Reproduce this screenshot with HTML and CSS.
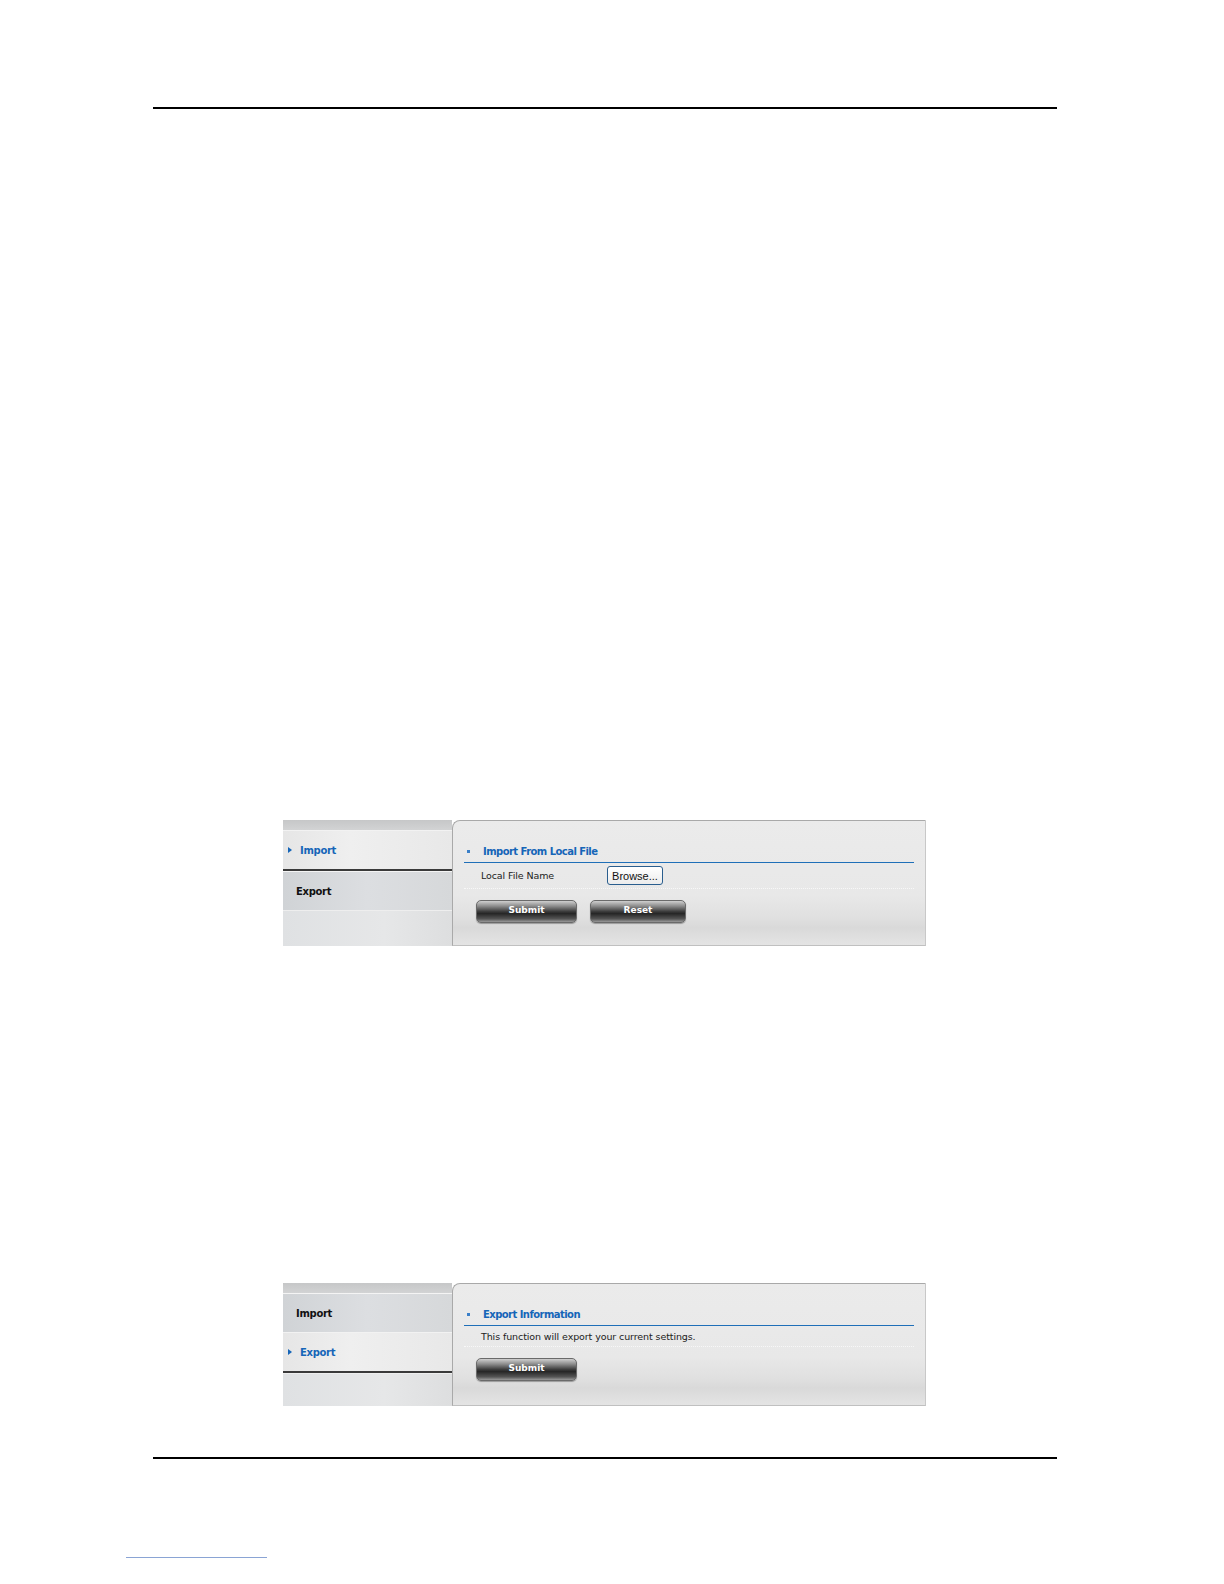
FILE: index.html
```html
<!DOCTYPE html>
<html>
<head>
<meta charset="utf-8">
<link rel="stylesheet" href="styles.css">
</head>
<body>
<div class="page">
  <div class="rule rule-top"></div>

  <div class="panel panel-import">
    <div class="side">
      <div class="side-strip"></div>
      <div class="side-item active"><span class="arrow"></span>Import</div>
      <div class="side-item">Export</div>
      <div class="side-rest"></div>
    </div>
    <div class="content">
      <div class="title"><span class="bullet"></span>Import From Local File</div>
      <div class="row">
        <span class="label">Local File Name</span>
        <span class="browse">Browse...</span>
      </div>
      <div class="btns">
        <span class="btn">Submit</span>
        <span class="btn">Reset</span>
      </div>
    </div>
  </div>

  <div class="panel panel-export">
    <div class="side">
      <div class="side-strip"></div>
      <div class="side-item first">Import</div>
      <div class="side-item active"><span class="arrow"></span>Export</div>
      <div class="side-rest"></div>
    </div>
    <div class="content">
      <div class="title"><span class="bullet"></span>Export Information</div>
      <div class="row row-text">This function will export your current settings.</div>
      <div class="btns">
        <span class="btn">Submit</span>
      </div>
    </div>
  </div>

  <div class="rule rule-bottom"></div>
  <div class="link-line"></div>
</div>
</body>
</html>
```

FILE: styles.css
```css
html, body {
  margin: 0;
  padding: 0;
  background: #ffffff;
  overflow: hidden;
}
.page {
  display: flex;
  flex-direction: column;
  font-family: "DejaVu Sans", Verdana, sans-serif;
}
.rule {
  width: 904px;
  height: 2px;
  background: #000;
  margin-left: 153px;
}
.rule-top {
  margin-top: 107px;
}
.panel {
  margin-left: 283px;
  width: 643px;
  display: flex;
}
.panel-import {
  margin-top: 711px;
  height: 126px;
}
.panel-export {
  margin-top: 337px;
  height: 123px;
}
.rule-bottom {
  margin-top: 51px;
}
.link-line {
  margin-top: 98px;
  margin-left: 126px;
  width: 141px;
  height: 1px;
  background: #8aa4d4;
}

/* sidebar */
.side {
  width: 169px;
  display: flex;
  flex-direction: column;
  background: linear-gradient(90deg, #dcdee0 0%, #e4e5e6 60%, #dadbdc 100%);
}
.side-strip {
  height: 10px;
  background: linear-gradient(#c6c7c8, #d2d3d4);
}
.side-item {
  height: 38px;
  display: flex;
  align-items: center;
  padding-left: 13px;
  font-size: 10px;
  font-weight: bold;
  color: #111;
  border-top: 1px solid #f4f4f4;
  background: linear-gradient(90deg, #d0d3d6 0%, #dcdee1 50%, #d6d8da 100%);
  letter-spacing: -0.3px;
}
.side-item.active {
  padding-left: 5px;
  color: #1565b8;
  background: linear-gradient(90deg, #e6e6e6 0%, #efefef 40%, #e8e8e8 100%);
  border-top: 1px solid #f2f2f2;
  border-bottom: 2px solid #3a3a3a;
}
.arrow {
  width: 0;
  height: 0;
  border-top: 3px solid transparent;
  border-bottom: 3px solid transparent;
  border-left: 4px solid #1565b8;
  margin-right: 8px;
}
.side-rest {
  flex: 1;
  border-top: 1px solid #eeeeee;
  background: linear-gradient(90deg, #dfe1e3 0%, #e6e7e8 60%, #dddedf 100%);
}

/* content */
.content {
  flex: 1;
  display: flex;
  flex-direction: column;
  border: 1px solid #a9a9a9;
  border-right-color: #c8c8c8;
  border-bottom-color: #c0c0c0;
  border-top-left-radius: 8px;
  padding: 0 11px 0 11px;
  background: linear-gradient(#ebebeb 0%, #e8e8e8 60%, #e0e0e0 78%, #d9d9d9 86%, #e4e4e4 100%);
}
.title {
  margin-top: 20px;
  height: 21px;
  display: flex;
  align-items: center;
  font-size: 10px;
  font-weight: bold;
  color: #1565b8;
  border-bottom: 1px solid #1f6fb8;
  letter-spacing: -0.55px;
}
.bullet {
  width: 3px;
  height: 3px;
  background: #3a7fc8;
  margin-left: 3px;
  margin-right: 13px;
}
.row {
  height: 25px;
  display: flex;
  align-items: center;
  padding-left: 17px;
  font-size: 9.5px;
  color: #222;
  border-bottom: 1px dotted #f8f8f8;
  letter-spacing: -0.1px;
}
.row-text {
  height: 20px;
}
.label {
  width: 126px;
}
.browse {
  height: 17px;
  width: 54px;
  border: 1px solid #2a5e8e;
  border-radius: 3px;
  background: linear-gradient(#ffffff, #ececec);
  font-family: "Liberation Sans", Arial, sans-serif;
  font-size: 11px;
  letter-spacing: 0;
  color: #111;
  display: flex;
  align-items: center;
  justify-content: center;
}
.btns {
  display: flex;
  gap: 13px;
  padding-left: 12px;
  margin-top: 11px;
}
.btn {
  width: 101px;
  height: 23px;
  box-sizing: border-box;
  border: 1px solid #6a6a6a;
  border-radius: 5px;
  background: linear-gradient(#cfcfcf 0%, #8a8a8a 25%, #3c3c3c 50%, #262626 60%, #555 85%, #9a9a9a 100%);
  box-shadow: 0 1px 1px #999;
  color: #fff;
  font-size: 9px;
  font-weight: bold;
  display: flex;
  align-items: center;
  justify-content: center;
  padding-bottom: 3px;
}
.btns .btn + .btn {
  width: 96px;
}
```
